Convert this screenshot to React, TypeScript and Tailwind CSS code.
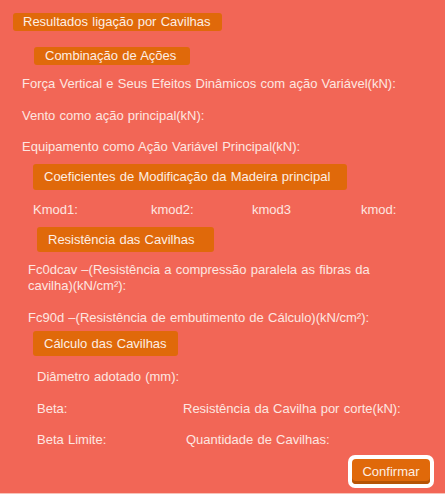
import React from 'react';

function SectionTitle({ children, className }: { children: React.ReactNode; className: string }) {
  return (
    <div className={`flex items-center rounded-[3px] bg-[#e0690a] text-[#fdeee4] ${className}`}>
      {children}
    </div>
  );
}

function Label({ children, className = '' }: { children: React.ReactNode; className?: string }) {
  return <div className={`h-[16px] leading-[16px] whitespace-nowrap ${className}`}>{children}</div>;
}

export default function App() {
  return (
    <div
      className="w-[445px] h-[494px] bg-[#f26656] text-[#fde6e1] text-[13px] [word-spacing:0.6px] flex flex-col border-b border-[#f8c3b9]"
      style={{ fontFamily: '"Liberation Sans", Arial, sans-serif' }}
    >
      <SectionTitle className="mt-[13px] ml-[13px] w-[209px] h-[18px] pl-[10px]">
        Resultados ligação por Cavilhas
      </SectionTitle>
      <SectionTitle className="mt-[16px] ml-[34px] w-[156px] h-[18px] pl-[11px]">
        Combinação de Ações
      </SectionTitle>

      <Label className="mt-[11px] ml-[22px]">Força Vertical e Seus Efeitos Dinâmicos com ação Variável(kN):</Label>
      <Label className="mt-[16px] ml-[22px]">Vento como ação principal(kN):</Label>
      <Label className="mt-[15px] ml-[22px]">Equipamento como Ação Variável Principal(kN):</Label>

      <SectionTitle className="mt-[9px] ml-[33px] w-[314px] h-[26px] pl-[11px]">
        Coeficientes de Modificação da Madeira principal
      </SectionTitle>

      <div className="mt-[12px] ml-[33px] flex h-[16px] leading-[16px]">
        <span className="w-[118px]">Kmod1:</span>
        <span className="w-[101px]">kmod2:</span>
        <span className="w-[109px]">kmod3</span>
        <span>kmod:</span>
      </div>

      <SectionTitle className="mt-[9px] ml-[37px] w-[177px] h-[25px] pl-[11px]">
        Resistência das Cavilhas
      </SectionTitle>

      <div className="mt-[10px] ml-[28px] w-[380px] leading-[16px]">
        Fc0dcav –(Resistência a compressão paralela as fibras da cavilha)(kN/cm²):
      </div>
      <Label className="mt-[16px] ml-[28px]">Fc90d –(Resistência de embutimento de Cálculo)(kN/cm²):</Label>

      <SectionTitle className="mt-[5px] ml-[33px] w-[145px] h-[25px] pl-[11px]">
        Cálculo das Cavilhas
      </SectionTitle>

      <Label className="mt-[13px] ml-[37px]">Diâmetro adotado (mm):</Label>
      <div className="mt-[16px] ml-[37px] flex h-[16px] leading-[16px]">
        <span className="w-[146px]">Beta:</span>
        <span>Resistência da Cavilha por corte(kN):</span>
      </div>
      <div className="mt-[15px] ml-[37px] flex h-[16px] leading-[16px]">
        <span className="w-[149px]">Beta Limite:</span>
        <span>Quantidade de Cavilhas:</span>
      </div>

      <div className="mt-[7px] ml-auto mr-[11px] rounded-[7px] bg-white p-[4px]">
        <button className="w-[78px] h-[25px] rounded-[4px] bg-[#e0690a] text-[#fdeee4] text-[13px] shadow-[inset_0_-3px_0_#b65405]">
          Confirmar
        </button>
      </div>
    </div>
  );
}
